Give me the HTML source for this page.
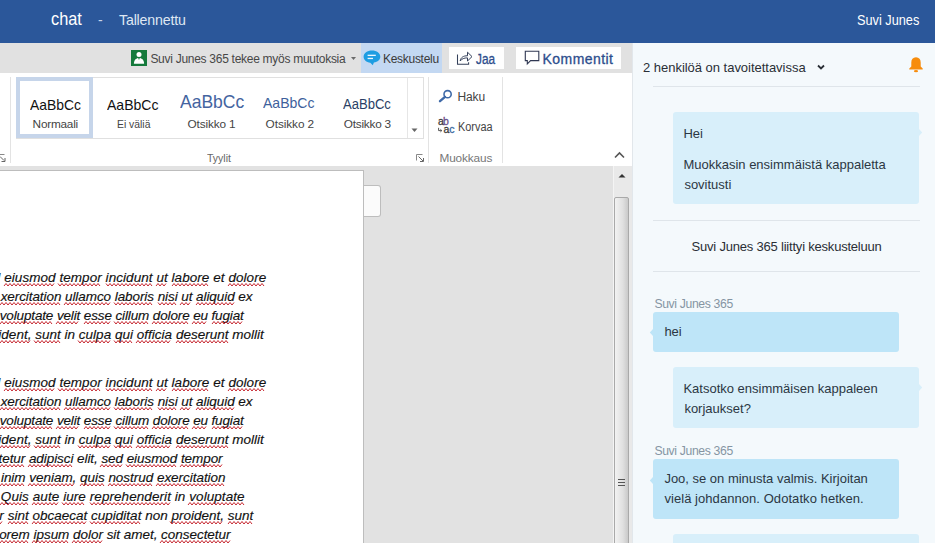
<!DOCTYPE html>
<html><head><meta charset="utf-8">
<style>
html,body{margin:0;padding:0;width:935px;height:543px;overflow:hidden;background:#fff}
body{position:relative;font-family:"Liberation Sans",sans-serif}
.a{position:absolute}
.t{position:absolute;white-space:pre;font-family:"Liberation Sans",sans-serif}
.d{font-size:13.5px;line-height:13.5px;font-style:italic;color:#111;-webkit-text-stroke:0.15px #111}
.d u{text-decoration:none}
</style></head><body>
<!-- title bar -->
<div class="a" style="left:0;top:0;width:935px;height:43px;background:#2b579a"></div>
<!-- gray band -->
<div class="a" style="left:0;top:43px;width:632px;height:30px;background:#e1e1e1"></div>
<div class="a" style="left:361px;top:43px;width:81px;height:30px;background:#c3d8f2"></div>
<div class="a" style="left:449px;top:47px;width:55px;height:22px;background:#fefefe"></div>
<div class="a" style="left:516px;top:47px;width:105px;height:22px;background:#fefefe"></div>
<!-- green person icon -->
<svg class="a" style="left:131px;top:50px" width="16" height="16" viewBox="0 0 16 16">
<rect width="16" height="16" fill="#157a3c"/>
<circle cx="8" cy="4.4" r="2.5" fill="#fff"/>
<path d="M2.9 13.7C2.9 10.2 4.8 7.9 8 7.9C11.2 7.9 13.1 10.2 13.1 13.7Z" fill="#fff"/>
<path d="M7.1 7.7H8.9L8 9.9Z" fill="#157a3c"/>
</svg>
<!-- dropdown arrow -->
<svg class="a" style="left:351px;top:57px" width="5" height="3" viewBox="0 0 5 3"><path d="M0 0H5L2.5 3Z" fill="#6a6a6a"/></svg>
<!-- chat bubble icon -->
<svg class="a" style="left:363px;top:50px" width="18" height="16" viewBox="0 0 18 16">
<path d="M9 0.6C4.3 0.6 0.6 3.2 0.6 6.8C0.6 9.9 3.3 12.2 7.3 12.7L9.8 15.2L10.9 12.6C14.8 12 17.3 9.8 17.3 6.8C17.3 3.2 13.7 0.6 9 0.6Z" fill="#1d9de2"/>
<rect x="4.6" y="4.7" width="8.2" height="1.3" fill="#eaf6ff"/>
<rect x="4.6" y="7.8" width="5.4" height="1.3" fill="#eaf6ff"/>
</svg>
<!-- share icon -->
<svg class="a" style="left:456px;top:50px" width="18" height="16" viewBox="0 0 18 16">
<path d="M1.5 4.5V14.3H12.6V12.2" fill="none" stroke="#34405a" stroke-width="1.05"/>
<path d="M4.2 11C4.6 7.6 7.4 5.6 11.5 5.8V2.2L16 6.6L11.5 11V7.9C8.2 7.8 5.8 8.8 4.2 11Z" fill="none" stroke="#34405a" stroke-width="1" stroke-linejoin="round"/>
</svg>
<!-- comment icon -->
<svg class="a" style="left:524px;top:50px" width="16" height="16" viewBox="0 0 16 16">
<path d="M1.3 1.3H14.8V10.6H6.6L3.3 14V10.6H1.3Z" fill="none" stroke="#2f3752" stroke-width="1.1" stroke-linejoin="miter"/>
</svg>

<!-- ribbon -->
<div class="a" style="left:0;top:73px;width:632px;height:93px;background:#ffffff"></div>
<div class="a" style="left:10px;top:77px;width:1px;height:86px;background:#e3e3e3"></div>
<svg class="a" style="left:0px;top:153px" width="6" height="10" viewBox="0 0 6 10"><path d="M0 1.5H4.5" fill="none" stroke="#888" stroke-width="1"/><path d="M0 3.5L4 7.5M1.5 8.5H5V5" fill="none" stroke="#666" stroke-width="1"/></svg>
<!-- gallery -->
<div class="a" style="left:16px;top:77px;width:406px;height:60px;border:1px solid #e0e0e0;box-sizing:content-box"></div>
<div class="a" style="left:407px;top:78px;width:1px;height:60px;background:#e6e6e6"></div>
<div class="a" style="left:16px;top:77px;width:69px;height:53px;border:4px solid #c6d5ea"></div>
<svg class="a" style="left:411px;top:128px" width="7" height="5" viewBox="0 0 7 5"><path d="M0.5 0.5H6.5L3.5 4Z" fill="#666"/></svg>
<svg class="a" style="left:415px;top:153px" width="10" height="10" viewBox="0 0 10 10"><path d="M1.5 7.5V1.5H7.5" fill="none" stroke="#888" stroke-width="1"/><path d="M3.5 3.5L8 8M5 8.5H8.5V5" fill="none" stroke="#666" stroke-width="1"/></svg>
<div class="a" style="left:428px;top:77px;width:1px;height:86px;background:#e3e3e3"></div>
<div class="a" style="left:502px;top:77px;width:1px;height:86px;background:#e3e3e3"></div>
<!-- haku icon -->
<svg class="a" style="left:438px;top:89px" width="16" height="14" viewBox="0 0 16 14">
<circle cx="9.6" cy="5.2" r="3.6" fill="none" stroke="#3f6aa8" stroke-width="1.6"/>
<path d="M7 7.9L2 12.2" stroke="#3f6aa8" stroke-width="2.4" stroke-linecap="round"/>
</svg>
<!-- korvaa icon -->
<svg class="a" style="left:437px;top:127px" width="6" height="6" viewBox="0 0 6 6"><path d="M1.6 0.8V3.6H4.6M3.4 2.3L4.8 3.6L3.4 4.9" fill="none" stroke="#444" stroke-width="0.9"/></svg>
<!-- collapse chevron -->
<svg class="a" style="left:614px;top:151px" width="11" height="8" viewBox="0 0 11 8"><path d="M1 6.5L5.5 2L10 6.5" fill="none" stroke="#555" stroke-width="1.6"/></svg>

<!-- document area -->
<div class="a" style="left:0;top:166px;width:632px;height:377px;background:#e2e2e2"></div>
<div class="a" style="left:363px;top:185px;width:17px;height:30px;background:#fbfbfb;border:1px solid #bdbdbd;border-left:none;border-radius:0 3px 3px 0"></div>
<div class="a" style="left:-2px;top:170px;width:364px;height:380px;background:#fff;border:1px solid #bdbdbd"></div>
<div class="t d" style="left:-2.66px;top:270.60px;letter-spacing:0.054px"><u>l</u> <u>eiusmod</u> <u>tempor</u> <u>incidunt</u> <u>ut</u> <u>labore</u> et <u>dolore</u></div>
<div class="t d" style="left:0.63px;top:289.60px;letter-spacing:-0.076px"><u>xercitation</u> <u>ullamco</u> <u>laboris</u> <u>nisi</u> <u>ut</u> <u>aliquid</u> ex</div>
<div class="t d" style="left:-0.34px;top:308.60px;letter-spacing:-0.135px"><u>voluptate</u> <u>velit</u> <u>esse</u> <u>cillum</u> <u>dolore</u> <u>eu</u> <u>fugiat</u></div>
<div class="t d" style="left:-1.67px;top:327.60px;letter-spacing:0.011px"><u>ident,</u> <u>sunt</u> in <u>culpa</u> <u>qui</u> <u>officia</u> <u>deserunt</u> mollit</div>
<div class="t d" style="left:-2.66px;top:375.60px;letter-spacing:0.054px"><u>l</u> <u>eiusmod</u> <u>tempor</u> <u>incidunt</u> <u>ut</u> <u>labore</u> et <u>dolore</u></div>
<div class="t d" style="left:0.63px;top:394.60px;letter-spacing:-0.076px"><u>xercitation</u> <u>ullamco</u> <u>laboris</u> <u>nisi</u> <u>ut</u> <u>aliquid</u> ex</div>
<div class="t d" style="left:-0.34px;top:413.60px;letter-spacing:-0.135px"><u>voluptate</u> <u>velit</u> <u>esse</u> <u>cillum</u> <u>dolore</u> <u>eu</u> <u>fugiat</u></div>
<div class="t d" style="left:-1.67px;top:432.60px;letter-spacing:0.011px"><u>ident,</u> <u>sunt</u> in <u>culpa</u> <u>qui</u> <u>officia</u> <u>deserunt</u> mollit</div>
<div class="t d" style="left:-1.48px;top:451.60px;letter-spacing:-0.069px"><u>tetur</u> <u>adipisci</u> elit, <u>sed</u> <u>eiusmod</u> <u>tempor</u></div>
<div class="t d" style="left:0.94px;top:470.60px;letter-spacing:-0.035px"><u>inim</u> <u>veniam,</u> <u>quis</u> <u>nostrud</u> <u>exercitation</u></div>
<div class="t d" style="left:-6.79px;top:489.60px;letter-spacing:0.069px">. <u>Quis</u> <u>aute</u> <u>iure</u> <u>reprehenderit</u> in <u>voluptate</u></div>
<div class="t d" style="left:-0.66px;top:508.60px;letter-spacing:0.006px"><u>r</u> <u>sint</u> <u>obcaecat</u> <u>cupiditat</u> non <u>proident,</u> <u>sunt</u></div>
<div class="t d" style="left:-0.88px;top:527.60px;letter-spacing:-0.033px"><u>orem</u> <u>ipsum</u> <u>dolor</u> sit amet, <u>consectetur</u></div>
<svg class="a" style="left:0;top:0" width="363" height="543"><path fill="none" stroke="#c0101a" stroke-width="0.9" d="M4 286.0L6 283.5L8 286.0L10 283.5L12 286.0L14 283.5L16 286.0L18 283.5L20 286.0L22 283.5L24 286.0L26 283.5L28 286.0L30 283.5L32 286.0L34 283.5L36 286.0L38 283.5L40 286.0L42 283.5L44 286.0L46 283.5L48 286.0L50 283.5L52 286.0L54 283.5M58 283.5L60 286.0L62 283.5L64 286.0L66 283.5L68 286.0L70 283.5L72 286.0L74 283.5L76 286.0L78 283.5L80 286.0L82 283.5L84 286.0L86 283.5L88 286.0L90 283.5L92 286.0L94 283.5L96 286.0L98 283.5L100 286.0M106 283.5L108 286.0L110 283.5L112 286.0L114 283.5L116 286.0L118 283.5L120 286.0L122 283.5L124 286.0L126 283.5L128 286.0L130 283.5L132 286.0L134 283.5L136 286.0L138 283.5L140 286.0L142 283.5L144 286.0L146 283.5L148 286.0L150 283.5L152 286.0M156 286.0L158 283.5L160 286.0L162 283.5L164 286.0L166 283.5M172 286.0L174 283.5L176 286.0L178 283.5L180 286.0L182 283.5L184 286.0L186 283.5L188 286.0L190 283.5L192 286.0L194 283.5L196 286.0L198 283.5L200 286.0L202 283.5L204 286.0L206 283.5L208 286.0M228 286.0L230 283.5L232 286.0L234 283.5L236 286.0L238 283.5L240 286.0L242 283.5L244 286.0L246 283.5L248 286.0L250 283.5L252 286.0L254 283.5L256 286.0L258 283.5L260 286.0L262 283.5L264 286.0M0 305.0L2 302.5L4 305.0L6 302.5L8 305.0L10 302.5L12 305.0L14 302.5L16 305.0L18 302.5L20 305.0L22 302.5L24 305.0L26 302.5L28 305.0L30 302.5L32 305.0L34 302.5L36 305.0L38 302.5L40 305.0L42 302.5L44 305.0L46 302.5L48 305.0L50 302.5L52 305.0L54 302.5L56 305.0L58 302.5L60 305.0M64 305.0L66 302.5L68 305.0L70 302.5L72 305.0L74 302.5L76 305.0L78 302.5L80 305.0L82 302.5L84 305.0L86 302.5L88 305.0L90 302.5L92 305.0L94 302.5L96 305.0L98 302.5L100 305.0L102 302.5L104 305.0L106 302.5L108 305.0L110 302.5M114 302.5L116 305.0L118 302.5L120 305.0L122 302.5L124 305.0L126 302.5L128 305.0L130 302.5L132 305.0L134 302.5L136 305.0L138 302.5L140 305.0L142 302.5L144 305.0L146 302.5L148 305.0L150 302.5L152 305.0M158 302.5L160 305.0L162 302.5L164 305.0L166 302.5L168 305.0L170 302.5L172 305.0L174 302.5L176 305.0M180 305.0L182 302.5L184 305.0L186 302.5L188 305.0L190 302.5M196 305.0L198 302.5L200 305.0L202 302.5L204 305.0L206 302.5L208 305.0L210 302.5L212 305.0L214 302.5L216 305.0L218 302.5L220 305.0L222 302.5L224 305.0L226 302.5L228 305.0L230 302.5L232 305.0L234 302.5M0 324.0L2 321.5L4 324.0L6 321.5L8 324.0L10 321.5L12 324.0L14 321.5L16 324.0L18 321.5L20 324.0L22 321.5L24 324.0L26 321.5L28 324.0L30 321.5L32 324.0L34 321.5L36 324.0L38 321.5L40 324.0L42 321.5L44 324.0L46 321.5L48 324.0L50 321.5L52 324.0M56 324.0L58 321.5L60 324.0L62 321.5L64 324.0L66 321.5L68 324.0L70 321.5L72 324.0L74 321.5L76 324.0L78 321.5M84 324.0L86 321.5L88 324.0L90 321.5L92 324.0L94 321.5L96 324.0L98 321.5L100 324.0L102 321.5L104 324.0L106 321.5L108 324.0L110 321.5M114 321.5L116 324.0L118 321.5L120 324.0L122 321.5L124 324.0L126 321.5L128 324.0L130 321.5L132 324.0L134 321.5L136 324.0L138 321.5L140 324.0L142 321.5L144 324.0L146 321.5L148 324.0M152 324.0L154 321.5L156 324.0L158 321.5L160 324.0L162 321.5L164 324.0L166 321.5L168 324.0L170 321.5L172 324.0L174 321.5L176 324.0L178 321.5L180 324.0L182 321.5L184 324.0L186 321.5L188 324.0M192 324.0L194 321.5L196 324.0L198 321.5L200 324.0L202 321.5L204 324.0L206 321.5M212 324.0L214 321.5L216 324.0L218 321.5L220 324.0L222 321.5L224 324.0L226 321.5L228 324.0L230 321.5L232 324.0L234 321.5L236 324.0L238 321.5L240 324.0L242 321.5M-2 340.5L0 343.0L2 340.5L4 343.0L6 340.5L8 343.0L10 340.5L12 343.0L14 340.5L16 343.0L18 340.5L20 343.0L22 340.5L24 343.0L26 340.5L28 343.0L30 340.5M34 340.5L36 343.0L38 340.5L40 343.0L42 340.5L44 343.0L46 340.5L48 343.0L50 340.5L52 343.0L54 340.5L56 343.0L58 340.5L60 343.0M78 340.5L80 343.0L82 340.5L84 343.0L86 340.5L88 343.0L90 340.5L92 343.0L94 340.5L96 343.0L98 340.5L100 343.0L102 340.5L104 343.0L106 340.5L108 343.0L110 340.5M114 340.5L116 343.0L118 340.5L120 343.0L122 340.5L124 343.0L126 340.5L128 343.0L130 340.5L132 343.0M136 343.0L138 340.5L140 343.0L142 340.5L144 343.0L146 340.5L148 343.0L150 340.5L152 343.0L154 340.5L156 343.0L158 340.5L160 343.0L162 340.5L164 343.0L166 340.5L168 343.0L170 340.5M176 343.0L178 340.5L180 343.0L182 340.5L184 343.0L186 340.5L188 343.0L190 340.5L192 343.0L194 340.5L196 343.0L198 340.5L200 343.0L202 340.5L204 343.0L206 340.5L208 343.0L210 340.5L212 343.0L214 340.5L216 343.0L218 340.5L220 343.0L222 340.5L224 343.0L226 340.5L228 343.0M4 391.0L6 388.5L8 391.0L10 388.5L12 391.0L14 388.5L16 391.0L18 388.5L20 391.0L22 388.5L24 391.0L26 388.5L28 391.0L30 388.5L32 391.0L34 388.5L36 391.0L38 388.5L40 391.0L42 388.5L44 391.0L46 388.5L48 391.0L50 388.5L52 391.0L54 388.5M58 388.5L60 391.0L62 388.5L64 391.0L66 388.5L68 391.0L70 388.5L72 391.0L74 388.5L76 391.0L78 388.5L80 391.0L82 388.5L84 391.0L86 388.5L88 391.0L90 388.5L92 391.0L94 388.5L96 391.0L98 388.5L100 391.0M106 388.5L108 391.0L110 388.5L112 391.0L114 388.5L116 391.0L118 388.5L120 391.0L122 388.5L124 391.0L126 388.5L128 391.0L130 388.5L132 391.0L134 388.5L136 391.0L138 388.5L140 391.0L142 388.5L144 391.0L146 388.5L148 391.0L150 388.5L152 391.0M156 391.0L158 388.5L160 391.0L162 388.5L164 391.0L166 388.5M172 391.0L174 388.5L176 391.0L178 388.5L180 391.0L182 388.5L184 391.0L186 388.5L188 391.0L190 388.5L192 391.0L194 388.5L196 391.0L198 388.5L200 391.0L202 388.5L204 391.0L206 388.5L208 391.0M228 391.0L230 388.5L232 391.0L234 388.5L236 391.0L238 388.5L240 391.0L242 388.5L244 391.0L246 388.5L248 391.0L250 388.5L252 391.0L254 388.5L256 391.0L258 388.5L260 391.0L262 388.5L264 391.0M0 410.0L2 407.5L4 410.0L6 407.5L8 410.0L10 407.5L12 410.0L14 407.5L16 410.0L18 407.5L20 410.0L22 407.5L24 410.0L26 407.5L28 410.0L30 407.5L32 410.0L34 407.5L36 410.0L38 407.5L40 410.0L42 407.5L44 410.0L46 407.5L48 410.0L50 407.5L52 410.0L54 407.5L56 410.0L58 407.5L60 410.0M64 410.0L66 407.5L68 410.0L70 407.5L72 410.0L74 407.5L76 410.0L78 407.5L80 410.0L82 407.5L84 410.0L86 407.5L88 410.0L90 407.5L92 410.0L94 407.5L96 410.0L98 407.5L100 410.0L102 407.5L104 410.0L106 407.5L108 410.0L110 407.5M114 407.5L116 410.0L118 407.5L120 410.0L122 407.5L124 410.0L126 407.5L128 410.0L130 407.5L132 410.0L134 407.5L136 410.0L138 407.5L140 410.0L142 407.5L144 410.0L146 407.5L148 410.0L150 407.5L152 410.0M158 407.5L160 410.0L162 407.5L164 410.0L166 407.5L168 410.0L170 407.5L172 410.0L174 407.5L176 410.0M180 410.0L182 407.5L184 410.0L186 407.5L188 410.0L190 407.5M196 410.0L198 407.5L200 410.0L202 407.5L204 410.0L206 407.5L208 410.0L210 407.5L212 410.0L214 407.5L216 410.0L218 407.5L220 410.0L222 407.5L224 410.0L226 407.5L228 410.0L230 407.5L232 410.0L234 407.5M0 429.0L2 426.5L4 429.0L6 426.5L8 429.0L10 426.5L12 429.0L14 426.5L16 429.0L18 426.5L20 429.0L22 426.5L24 429.0L26 426.5L28 429.0L30 426.5L32 429.0L34 426.5L36 429.0L38 426.5L40 429.0L42 426.5L44 429.0L46 426.5L48 429.0L50 426.5L52 429.0M56 429.0L58 426.5L60 429.0L62 426.5L64 429.0L66 426.5L68 429.0L70 426.5L72 429.0L74 426.5L76 429.0L78 426.5M84 429.0L86 426.5L88 429.0L90 426.5L92 429.0L94 426.5L96 429.0L98 426.5L100 429.0L102 426.5L104 429.0L106 426.5L108 429.0L110 426.5M114 426.5L116 429.0L118 426.5L120 429.0L122 426.5L124 429.0L126 426.5L128 429.0L130 426.5L132 429.0L134 426.5L136 429.0L138 426.5L140 429.0L142 426.5L144 429.0L146 426.5L148 429.0M152 429.0L154 426.5L156 429.0L158 426.5L160 429.0L162 426.5L164 429.0L166 426.5L168 429.0L170 426.5L172 429.0L174 426.5L176 429.0L178 426.5L180 429.0L182 426.5L184 429.0L186 426.5L188 429.0M192 429.0L194 426.5L196 429.0L198 426.5L200 429.0L202 426.5L204 429.0L206 426.5M212 429.0L214 426.5L216 429.0L218 426.5L220 429.0L222 426.5L224 429.0L226 426.5L228 429.0L230 426.5L232 429.0L234 426.5L236 429.0L238 426.5L240 429.0L242 426.5M-2 445.5L0 448.0L2 445.5L4 448.0L6 445.5L8 448.0L10 445.5L12 448.0L14 445.5L16 448.0L18 445.5L20 448.0L22 445.5L24 448.0L26 445.5L28 448.0L30 445.5M34 445.5L36 448.0L38 445.5L40 448.0L42 445.5L44 448.0L46 445.5L48 448.0L50 445.5L52 448.0L54 445.5L56 448.0L58 445.5L60 448.0M78 445.5L80 448.0L82 445.5L84 448.0L86 445.5L88 448.0L90 445.5L92 448.0L94 445.5L96 448.0L98 445.5L100 448.0L102 445.5L104 448.0L106 445.5L108 448.0L110 445.5M114 445.5L116 448.0L118 445.5L120 448.0L122 445.5L124 448.0L126 445.5L128 448.0L130 445.5L132 448.0M136 448.0L138 445.5L140 448.0L142 445.5L144 448.0L146 445.5L148 448.0L150 445.5L152 448.0L154 445.5L156 448.0L158 445.5L160 448.0L162 445.5L164 448.0L166 445.5L168 448.0L170 445.5M176 448.0L178 445.5L180 448.0L182 445.5L184 448.0L186 445.5L188 448.0L190 445.5L192 448.0L194 445.5L196 448.0L198 445.5L200 448.0L202 445.5L204 448.0L206 445.5L208 448.0L210 445.5L212 448.0L214 445.5L216 448.0L218 445.5L220 448.0L222 445.5L224 448.0L226 445.5L228 448.0M-2 464.5L0 467.0L2 464.5L4 467.0L6 464.5L8 467.0L10 464.5L12 467.0L14 464.5L16 467.0L18 464.5L20 467.0L22 464.5L24 467.0M28 467.0L30 464.5L32 467.0L34 464.5L36 467.0L38 464.5L40 467.0L42 464.5L44 467.0L46 464.5L48 467.0L50 464.5L52 467.0L54 464.5L56 467.0L58 464.5L60 467.0L62 464.5L64 467.0L66 464.5L68 467.0L70 464.5L72 467.0M100 467.0L102 464.5L104 467.0L106 464.5L108 467.0L110 464.5L112 467.0L114 464.5L116 467.0L118 464.5L120 467.0L122 464.5M126 464.5L128 467.0L130 464.5L132 467.0L134 464.5L136 467.0L138 464.5L140 467.0L142 464.5L144 467.0L146 464.5L148 467.0L150 464.5L152 467.0L154 464.5L156 467.0L158 464.5L160 467.0L162 464.5L164 467.0L166 464.5L168 467.0L170 464.5L172 467.0L174 464.5L176 467.0M180 467.0L182 464.5L184 467.0L186 464.5L188 467.0L190 464.5L192 467.0L194 464.5L196 467.0L198 464.5L200 467.0L202 464.5L204 467.0L206 464.5L208 467.0L210 464.5L212 467.0L214 464.5L216 467.0L218 464.5L220 467.0L222 464.5M0 486.0L2 483.5L4 486.0L6 483.5L8 486.0L10 483.5L12 486.0L14 483.5L16 486.0L18 483.5L20 486.0L22 483.5L24 486.0M28 486.0L30 483.5L32 486.0L34 483.5L36 486.0L38 483.5L40 486.0L42 483.5L44 486.0L46 483.5L48 486.0L50 483.5L52 486.0L54 483.5L56 486.0L58 483.5L60 486.0L62 483.5L64 486.0L66 483.5L68 486.0L70 483.5L72 486.0L74 483.5M80 486.0L82 483.5L84 486.0L86 483.5L88 486.0L90 483.5L92 486.0L94 483.5L96 486.0L98 483.5L100 486.0L102 483.5L104 486.0M108 486.0L110 483.5L112 486.0L114 483.5L116 486.0L118 483.5L120 486.0L122 483.5L124 486.0L126 483.5L128 486.0L130 483.5L132 486.0L134 483.5L136 486.0L138 483.5L140 486.0L142 483.5L144 486.0L146 483.5L148 486.0L150 483.5L152 486.0M156 486.0L158 483.5L160 486.0L162 483.5L164 486.0L166 483.5L168 486.0L170 483.5L172 486.0L174 483.5L176 486.0L178 483.5L180 486.0L182 483.5L184 486.0L186 483.5L188 486.0L190 483.5L192 486.0L194 483.5L196 486.0L198 483.5L200 486.0L202 483.5L204 486.0L206 483.5L208 486.0L210 483.5L212 486.0L214 483.5L216 486.0L218 483.5L220 486.0L222 483.5L224 486.0M0 505.0L2 502.5L4 505.0L6 502.5L8 505.0L10 502.5L12 505.0L14 502.5L16 505.0L18 502.5L20 505.0L22 502.5L24 505.0L26 502.5L28 505.0M32 505.0L34 502.5L36 505.0L38 502.5L40 505.0L42 502.5L44 505.0L46 502.5L48 505.0L50 502.5L52 505.0L54 502.5L56 505.0L58 502.5M62 502.5L64 505.0L66 502.5L68 505.0L70 502.5L72 505.0L74 502.5L76 505.0L78 502.5L80 505.0L82 502.5L84 505.0M90 502.5L92 505.0L94 502.5L96 505.0L98 502.5L100 505.0L102 502.5L104 505.0L106 502.5L108 505.0L110 502.5L112 505.0L114 502.5L116 505.0L118 502.5L120 505.0L122 502.5L124 505.0L126 502.5L128 505.0L130 502.5L132 505.0L134 502.5L136 505.0L138 502.5L140 505.0L142 502.5L144 505.0L146 502.5L148 505.0L150 502.5L152 505.0L154 502.5L156 505.0L158 502.5L160 505.0L162 502.5L164 505.0L166 502.5L168 505.0L170 502.5M188 505.0L190 502.5L192 505.0L194 502.5L196 505.0L198 502.5L200 505.0L202 502.5L204 505.0L206 502.5L208 505.0L210 502.5L212 505.0L214 502.5L216 505.0L218 502.5L220 505.0L222 502.5L224 505.0L226 502.5L228 505.0L230 502.5L232 505.0L234 502.5L236 505.0L238 502.5L240 505.0L242 502.5L244 505.0M-2 521.5L0 524.0L2 521.5M8 524.0L10 521.5L12 524.0L14 521.5L16 524.0L18 521.5L20 524.0L22 521.5L24 524.0L26 521.5L28 524.0M32 524.0L34 521.5L36 524.0L38 521.5L40 524.0L42 521.5L44 524.0L46 521.5L48 524.0L50 521.5L52 524.0L54 521.5L56 524.0L58 521.5L60 524.0L62 521.5L64 524.0L66 521.5L68 524.0L70 521.5L72 524.0L74 521.5L76 524.0L78 521.5L80 524.0L82 521.5L84 524.0L86 521.5M90 521.5L92 524.0L94 521.5L96 524.0L98 521.5L100 524.0L102 521.5L104 524.0L106 521.5L108 524.0L110 521.5L112 524.0L114 521.5L116 524.0L118 521.5L120 524.0L122 521.5L124 524.0L126 521.5L128 524.0L130 521.5L132 524.0L134 521.5L136 524.0L138 521.5L140 524.0M170 521.5L172 524.0L174 521.5L176 524.0L178 521.5L180 524.0L182 521.5L184 524.0L186 521.5L188 524.0L190 521.5L192 524.0L194 521.5L196 524.0L198 521.5L200 524.0L202 521.5L204 524.0L206 521.5L208 524.0L210 521.5L212 524.0L214 521.5L216 524.0L218 521.5L220 524.0L222 521.5M228 524.0L230 521.5L232 524.0L234 521.5L236 524.0L238 521.5L240 524.0L242 521.5L244 524.0L246 521.5L248 524.0L250 521.5L252 524.0M-2 540.5L0 543.0L2 540.5L4 543.0L6 540.5L8 543.0L10 540.5L12 543.0L14 540.5L16 543.0L18 540.5L20 543.0L22 540.5L24 543.0L26 540.5L28 543.0M32 543.0L34 540.5L36 543.0L38 540.5L40 543.0L42 540.5L44 543.0L46 540.5L48 543.0L50 540.5L52 543.0L54 540.5L56 543.0L58 540.5L60 543.0L62 540.5L64 543.0L66 540.5L68 543.0M72 543.0L74 540.5L76 543.0L78 540.5L80 543.0L82 540.5L84 543.0L86 540.5L88 543.0L90 540.5L92 543.0L94 540.5L96 543.0L98 540.5L100 543.0L102 540.5M160 543.0L162 540.5L164 543.0L166 540.5L168 543.0L170 540.5L172 543.0L174 540.5L176 543.0L178 540.5L180 543.0L182 540.5L184 543.0L186 540.5L188 543.0L190 540.5L192 543.0L194 540.5L196 543.0L198 540.5L200 543.0L202 540.5L204 543.0L206 540.5L208 543.0L210 540.5L212 543.0L214 540.5L216 543.0L218 540.5L220 543.0L222 540.5L224 543.0L226 540.5L228 543.0L230 540.5"/></svg>
<!-- scrollbar -->
<div class="a" style="left:613px;top:166px;width:19px;height:377px;background:#e9e9e9;border-left:1px solid #f4f4f4;box-sizing:border-box"></div>
<svg class="a" style="left:617px;top:172px" width="10" height="7" viewBox="0 0 10 7"><path d="M1.5 5.5L5 2L8.5 5.5Z" fill="#333"/></svg>
<div class="a" style="left:614px;top:197px;width:13px;height:360px;border:1px solid #a9a9a9;border-radius:2px;background:linear-gradient(to right,#f2f2f2,#e0e0e0 60%,#c9c9c9)"></div>
<div class="a" style="left:618px;top:479px;width:7px;height:1.2px;background:#555"></div>
<div class="a" style="left:618px;top:482px;width:7px;height:1.2px;background:#555"></div>
<div class="a" style="left:618px;top:485px;width:7px;height:1.2px;background:#555"></div>

<!-- chat pane -->
<div class="a" style="left:632px;top:43px;width:303px;height:500px;background:#f4f9fc;border-left:1px solid #e2e7eb;box-sizing:border-box"></div>
<svg class="a" style="left:817px;top:63px" width="8" height="8" viewBox="0 0 8 8"><path d="M1 2.5L4 5.5L7 2.5" fill="none" stroke="#2a2f36" stroke-width="1.8"/></svg>
<svg class="a" style="left:908px;top:56px" width="16" height="17" viewBox="0 0 16 17">
<path d="M8 1.3C4.9 1.3 3.3 3.4 3.3 6.4V10.4L1.3 12.6V13.6H14.7V12.6L12.7 10.4V6.4C12.7 3.4 11.1 1.3 8 1.3Z" fill="#f78c0c"/>
<ellipse cx="8" cy="15.2" rx="2.1" ry="1.1" fill="#f78c0c"/>
</svg>
<div class="a" style="left:653px;top:86px;width:267px;height:1px;background:#dfe5ea"></div>
<!-- bubble 1 -->
<div class="a" style="left:673px;top:112px;width:246px;height:92px;background:#d8effa;border-radius:3px"></div>
<svg class="a" style="left:919px;top:129px" width="4" height="7" viewBox="0 0 4 7"><path d="M0 0L3.2 3.5L0 7Z" fill="#d8effa"/></svg>
<div class="a" style="left:653px;top:220px;width:267px;height:1px;background:#dfe5ea"></div>
<div class="a" style="left:653px;top:271px;width:267px;height:1px;background:#dfe5ea"></div>
<!-- bubble 2 -->
<div class="a" style="left:653px;top:312px;width:246px;height:40px;background:#bee5f8;border-radius:3px"></div>
<svg class="a" style="left:649px;top:329px" width="4" height="7" viewBox="0 0 4 7"><path d="M4 0L0.8 3.5L4 7Z" fill="#bee5f8"/></svg>
<!-- bubble 3 -->
<div class="a" style="left:673px;top:367px;width:246px;height:61px;background:#d8effa;border-radius:3px"></div>
<svg class="a" style="left:919px;top:384px" width="4" height="7" viewBox="0 0 4 7"><path d="M0 0L3.2 3.5L0 7Z" fill="#d8effa"/></svg>
<!-- bubble 4 -->
<div class="a" style="left:653px;top:459px;width:246px;height:60px;background:#bee5f8;border-radius:3px"></div>
<svg class="a" style="left:649px;top:477px" width="4" height="7" viewBox="0 0 4 7"><path d="M4 0L0.8 3.5L4 7Z" fill="#bee5f8"/></svg>
<!-- bubble 5 -->
<div class="a" style="left:673px;top:534px;width:246px;height:20px;background:#d8effa;border-radius:3px"></div>
<div class="t" style="left:51.00px;top:11.00px;font-size:17.5px;line-height:17.5px;color:#ffffff;transform:scaleX(0.9333);transform-origin:0 0">chat</div>
<div class="t" style="left:98.00px;top:13.00px;font-size:14px;line-height:14px;color:#c9d5ea">-</div>
<div class="t" style="left:119.00px;top:13.00px;font-size:14.2px;line-height:14.2px;color:#dfe7f3;letter-spacing:-0.173px">Tallennettu</div>
<div class="t" style="left:856.60px;top:14.00px;font-size:13.8px;line-height:13.8px;color:#ffffff;transform:scaleX(0.9232);transform-origin:0 0">Suvi Junes</div>
<div class="t" style="left:150.40px;top:52.80px;font-size:12px;line-height:12px;color:#474747;letter-spacing:-0.279px">Suvi Junes 365 tekee myös muutoksia</div>
<div class="t" style="left:383.00px;top:53.00px;font-size:12px;line-height:12px;color:#3a3a3a;letter-spacing:-0.292px">Keskustelu</div>
<div class="t" style="left:476.40px;top:52.00px;font-size:14px;line-height:14px;color:#2c4d8c;transform:scaleX(0.8426);transform-origin:0 0;-webkit-text-stroke:0.3px #2c4d8c">Jaa</div>
<div class="t" style="left:542.60px;top:52.00px;font-size:14px;line-height:14px;color:#2c4d8c;letter-spacing:0.422px;-webkit-text-stroke:0.3px #2c4d8c">Kommentit</div>
<div class="t" style="left:438.00px;top:116.30px;font-size:10.5px;line-height:10.5px;color:#3a3a3a;-webkit-text-stroke:0.3px #3a3a3a">a</div>
<div class="t" style="left:443.00px;top:116.30px;font-size:10.5px;line-height:10.5px;color:#6a4e8a;-webkit-text-stroke:0.3px #6a4e8a">b</div>
<div class="t" style="left:443.50px;top:123.60px;font-size:10.5px;line-height:10.5px;color:#3a3a3a;-webkit-text-stroke:0.3px #3a3a3a">a</div>
<div class="t" style="left:449.30px;top:123.60px;font-size:10.5px;line-height:10.5px;color:#3a6aa0;-webkit-text-stroke:0.3px #3a6aa0">c</div>
<div class="t" style="left:29.60px;top:96.60px;font-size:15px;line-height:15px;color:#111111;transform:scaleX(0.9257);transform-origin:0 0">AaBbCc</div>
<div class="t" style="left:32.60px;top:119.00px;font-size:11.8px;line-height:11.8px;color:#444444;letter-spacing:-0.225px">Normaali</div>
<div class="t" style="left:107.00px;top:96.60px;font-size:15px;line-height:15px;color:#111111;transform:scaleX(0.9365);transform-origin:0 0">AaBbCc</div>
<div class="t" style="left:116.60px;top:119.00px;font-size:11.8px;line-height:11.8px;color:#444444;transform:scaleX(0.8787);transform-origin:0 0">Ei väliä</div>
<div class="t" style="left:179.60px;top:92.60px;font-size:18.6px;line-height:18.6px;color:#4464a0;transform:scaleX(0.9424);transform-origin:0 0">AaBbCc</div>
<div class="t" style="left:187.60px;top:119.00px;font-size:11.8px;line-height:11.8px;color:#444444;letter-spacing:-0.151px">Otsikko 1</div>
<div class="t" style="left:263.00px;top:95.40px;font-size:15px;line-height:15px;color:#3e5f9c;transform:scaleX(0.9365);transform-origin:0 0">AaBbCc</div>
<div class="t" style="left:265.60px;top:119.00px;font-size:11.8px;line-height:11.8px;color:#444444;letter-spacing:-0.076px">Otsikko 2</div>
<div class="t" style="left:343.20px;top:96.70px;font-size:14px;line-height:14px;color:#2a3f66;transform:scaleX(0.9327);transform-origin:0 0">AaBbCc</div>
<div class="t" style="left:343.80px;top:118.70px;font-size:11.8px;line-height:11.8px;color:#444444;letter-spacing:-0.239px">Otsikko 3</div>
<div class="t" style="left:207.00px;top:153.00px;font-size:11.8px;line-height:11.8px;color:#666666;transform:scaleX(0.8915);transform-origin:0 0">Tyylit</div>
<div class="t" style="left:457.60px;top:91.00px;font-size:12px;line-height:12px;color:#444444;letter-spacing:-0.180px">Haku</div>
<div class="t" style="left:457.60px;top:120.60px;font-size:12px;line-height:12px;color:#444444;transform:scaleX(0.9075);transform-origin:0 0">Korvaa</div>
<div class="t" style="left:439.50px;top:153.00px;font-size:11.8px;line-height:11.8px;color:#777777;letter-spacing:-0.138px">Muokkaus</div>
<div class="t" style="left:643.00px;top:61.00px;font-size:13px;line-height:13px;color:#2a2f36;letter-spacing:-0.025px">2 henkilöä on tavoitettavissa</div>
<div class="t" style="left:683.40px;top:127.00px;font-size:13px;line-height:13px;color:#2c3743">Hei</div>
<div class="t" style="left:683.40px;top:158.00px;font-size:13px;line-height:13px;color:#2c3743">Muokkasin ensimmäistä kappaletta</div>
<div class="t" style="left:684.40px;top:177.80px;font-size:13px;line-height:13px;color:#2c3743">sovitusti</div>
<div class="t" style="left:691.60px;top:240.00px;font-size:13px;line-height:13px;color:#2a2f36;letter-spacing:-0.207px">Suvi Junes 365 liittyi keskusteluun</div>
<div class="t" style="left:654.40px;top:298.00px;font-size:12.2px;line-height:12.2px;color:#8595a3;letter-spacing:-0.351px">Suvi Junes 365</div>
<div class="t" style="left:664.40px;top:324.60px;font-size:13px;line-height:13px;color:#2c3743">hei</div>
<div class="t" style="left:683.40px;top:382.00px;font-size:13px;line-height:13px;color:#2c3743">Katsotko ensimmäisen kappaleen</div>
<div class="t" style="left:684.40px;top:401.70px;font-size:13px;line-height:13px;color:#2c3743">korjaukset?</div>
<div class="t" style="left:654.40px;top:445.00px;font-size:12.2px;line-height:12.2px;color:#8595a3;letter-spacing:-0.351px">Suvi Junes 365</div>
<div class="t" style="left:664.40px;top:472.00px;font-size:13px;line-height:13px;color:#2c3743;letter-spacing:-0.009px">Joo, se on minusta valmis. Kirjoitan</div>
<div class="t" style="left:664.40px;top:492.00px;font-size:13px;line-height:13px;color:#2c3743;letter-spacing:0.059px">vielä johdannon. Odotatko hetken.</div>
</body></html>
